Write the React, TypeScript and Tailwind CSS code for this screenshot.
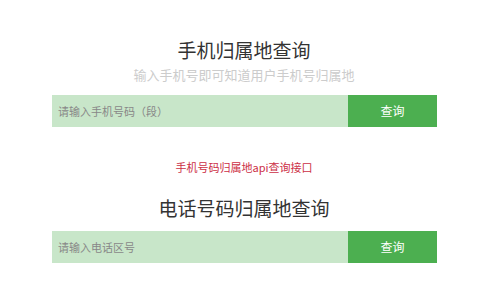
import React from "react";

function SearchBar({ placeholder }: { placeholder: string }) {
  return (
    <div className="flex h-[32px] w-[385px] ml-[52px]">
      <input
        className="flex-1 min-w-0 h-full bg-[#c8e6c9] pl-[6px] text-[11px] text-[#333] outline-none placeholder:text-[#888]"
        placeholder={placeholder}
      />
      <button className="w-[89px] h-full bg-[#4caf50] text-white text-[12px]">查询</button>
    </div>
  );
}

export default function App() {
  return (
    <div
      className="w-[480px] h-[300px] bg-white overflow-hidden flex flex-col"
      style={{ fontFamily: '"Noto Sans CJK SC", "Noto Sans", sans-serif' }}
    >
      <h1 className="mt-[38px] pl-[8px] h-[24px] leading-[24px] text-[19px] text-[#333] text-center">手机归属地查询</h1>
      <p className="h-[18px] pl-[8px] leading-[18px] mt-[4px] text-[13px] text-[#ccc] text-center">输入手机号即可知道用户手机号归属地</p>
      <div className="mt-[11px]">
        <SearchBar placeholder="请输入手机号码（段）" />
      </div>
      <a className="mt-[32px] pl-[8px] h-[16px] leading-[16px] text-[11px] text-[#cc2e45] text-center" href="#">
        手机号码归属地api查询接口
      </a>
      <h2 className="mt-[21px] pl-[8px] h-[24px] leading-[24px] text-[19px] text-[#333] text-center">电话号码归属地查询</h2>
      <div className="mt-[11px]">
        <SearchBar placeholder="请输入电话区号" />
      </div>
    </div>
  );
}
